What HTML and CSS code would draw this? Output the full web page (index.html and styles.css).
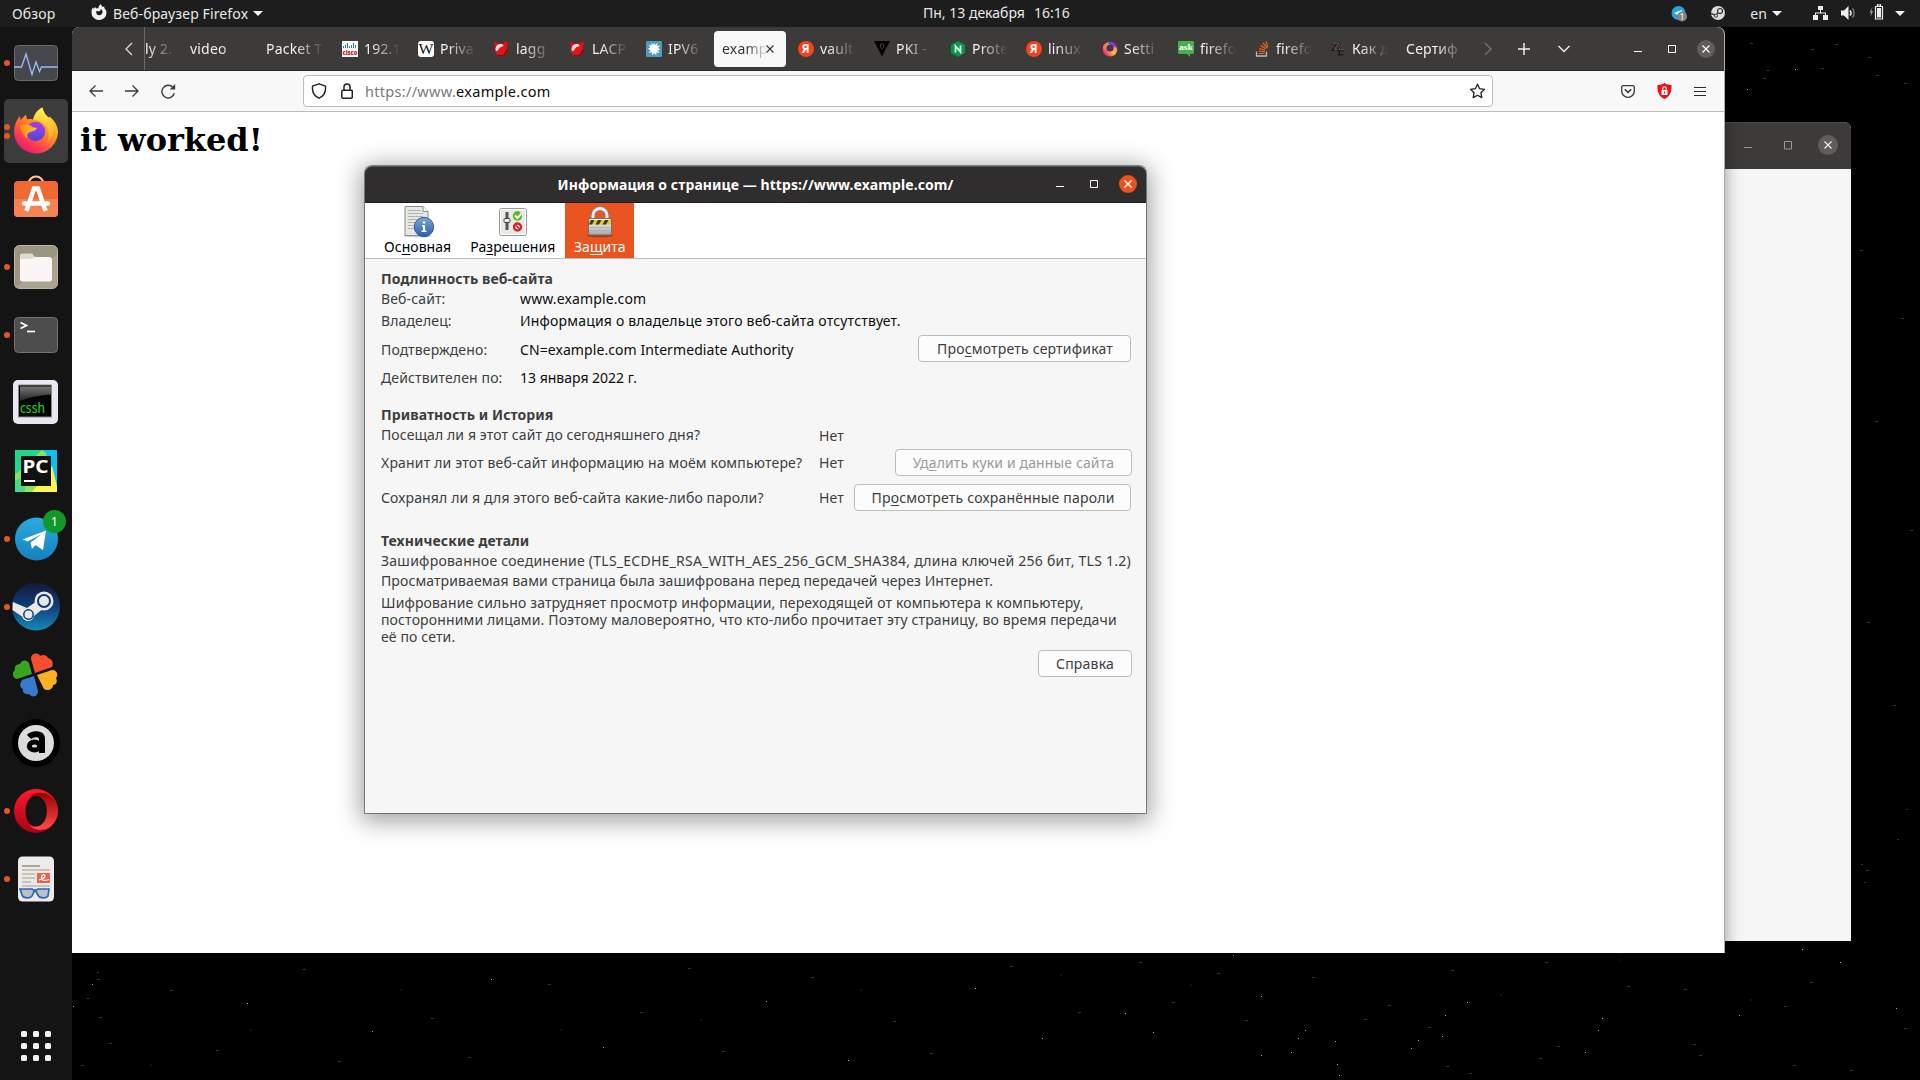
FILE: index.html
```html
<!DOCTYPE html>
<html lang="ru">
<head>
<meta charset="utf-8">
<title>Рабочий стол</title>
<link rel="stylesheet" href="styles.css">
</head>
<body>
<header class="topbar">
  <span class="overview">Обзор</span>
  <div class="app-menu">
    <svg width="16" height="16" viewBox="0 0 16 16"><path fill="#f2f2f2" fill-rule="evenodd" d="M8 16a7.4 7.4 0 0 1-7.5-7.6C.5 6 1 4.500 2.200 3.200l.5 1.500L4.600 2.900l.4 1.600c.7-.3 1.600-.2 2.300.1C7.400 2.800 8.300 1 9.800 0c.3 1.500 1 2.100 2.200 3l1.200-.6.2 1.800c1.300 1.200 2.100 2.700 2.100 4.500A7.400 7.400 0 0 1 8 16zM5 7.200c.1 2.700 1.400 4.100 3.200 4.100 2 0 3.300-1.500 3.300-3.300 0-1.500-.8-2.600-2-3.200.4 1.100.2 1.700-.6 2.300-1 .5-2.600.1-3.900.1z"/></svg>
    <span class="app-name">Веб-браузер Firefox</span>
    <i class="caret"></i>
  </div>
  <div class="clock"><span>Пн, 13 декабря</span><span>16:16</span></div>
  <div class="tray">
    <svg class="t-telegram" width="16" height="16" viewBox="0 0 16 16"><circle cx="7.500" cy="7" r="7" fill="#2aa1dc"/><path d="M3 7l8-3-1.500 7z" fill="#fff"/><circle cx="11" cy="10.500" r="5" fill="#858585"/><text x="11" y="13.600" text-anchor="middle" font-size="8" fill="#fff">1</text></svg>
    <svg class="t-steam" width="14" height="14" viewBox="0 0 14 14"><circle cx="7" cy="7" r="7" fill="#dcdcdc"/><path d="M0 7.500l4.500 1.800 3-2.800" stroke="#444" stroke-width="1.600" fill="none"/><circle cx="9" cy="5" r="2.500" fill="#dcdcdc" stroke="#333" stroke-width="1.200"/><circle cx="5" cy="9.800" r="1.600" fill="#dcdcdc" stroke="#444"/></svg>
    <span class="lang">en</span><i class="caret t-caret1"></i>
    <svg class="t-net" width="15" height="14" viewBox="0 0 15 14" fill="#eee"><path d="M5 0h5v4H8v2.500h5V9h2v5h-5V9h2V7.500H3V9h2v5H0V9h2V6.500h5V4H5z"/></svg>
    <svg class="t-vol" width="16" height="14" viewBox="0 0 16 14"><path d="M0 4.500h3L7.500 0v14L3 9.500H0z" fill="#eee"/><path d="M9 4.500c1.200 1.500 1.200 3.500 0 5" stroke="#eee" fill="none" stroke-width="1.500"/><path d="M11.500 2.500c2 2.500 2 6.500 0 9" stroke="#777" fill="none" stroke-width="1.500"/></svg>
    <svg class="t-bat" width="15" height="16" viewBox="0 0 15 16"><path d="M3.500 3L.5 8.500H2L1.500 13 4 7H2.500z" fill="#999"/><path d="M6.500 2.500h7v12.500h-7zM8.500 0h3v2h-3z" fill="none" stroke="#eee" stroke-width="1.200"/><path d="M8 4h4v9.500H8z" fill="#eee"/></svg>
    <i class="caret"></i>
  </div>
</header>

<main class="desktop">
  <svg class="stars" width="1920" height="1080" viewBox="0 0 1920 1080">
    <path class="star-bright" d="M1233 955.500h1M1261 996.500h1M1125 1013.500h1M1467 1002.500h1M1602 1018.500h1M1598 1030.500h1M1585 1052.500h1M1298 1038.500h1M1335 1041.500h1M1411 1048.500h1M1418 1040.500h1M1442 1036.500h1M1337 1064.500h1M1339 1075.500h1M1261 1055.500h1M1153 1032.500h1M1802 949.500h1M1840 962.500h1M1739 1015.500h1M1896 1008.500h1M1445 1015.500h1M1291 1052.500h1M1305 1030.500h1M1795 69.500h1M1747 89.500h1M92 984.500h1M73 1006.500h1M247 1003.500h1M372 1031.500h1M491 979.500h1M603 1047.500h1M766 1001.500h1M848 1060.500h1M975 988.500h1M1042 1038.500h1"/>
    <path class="star-dim" d="M1139 962.500h3M1217 973.500h3M1312 977.500h3M1451 970.500h3M1545 962.500h3M1627 986.500h3M1684 989.500h3M1810 982.500h3M1388 1005.500h3M1245 1020.500h3M1364 1019.500h3M1428 1027.500h3M1557 1046.500h3M1539 1058.500h3M1693 1044.500h3M1699 1055.500h3M1793 1065.500h3M1784 1006.500h3M1850 1070.500h3M1904 1028.500h3M1469 1073.500h3M1446 1066.500h3M1172 1002.500h3M1835 44.500h3M1811 49.500h3M1821 68.500h3M1763 78.500h3M1868 57.500h3M1876 75.500h3M1904 83.500h3M1750 43.500h3M1767 70.500h2M1906 809.500h2M1861 864.500h2M1866 870.500h3M1864 882.500h2M1897 839.500h2M97 972.500h2M97 979.500h3M87 998.500h2M99 1017.500h3M109 1043.500h3M81 1065.500h3M170 990.500h3M216 1050.500h3M303 969.500h3M338 1061.500h3M431 1018.500h3M468 1057.500h3M548 984.500h3M640 1012.500h3M688 968.500h3M722 1051.500h3M811 977.500h3M893 1021.500h3M930 1053.500h3M1010 966.500h3M1078 1012.500h3M1860 250.500h3M1901 318.500h3M1875 421.500h3M1910 530.500h3M1867 622.500h3M1893 705.500h3"/>
    <path class="star-faint" d="M33 920h2M43 930h2M32 938h2M32 970h2M64 981h2M24 991h2M29 1066h2M60 727h2M38 854h2M57 654h2M9 675h2M23 714h2M39 43h2M17 150h2M2 214h2M69 276h2M60 362h2M7 368h2M20 497h2M68 544h2M64 893h2M9 904h2M10 1007h2M1750 1000h2M1620 960h2M1500 995h2M1190 985h2M1060 975h2M700 1020h2M400 990h2M250 1030h2M150 1065h2M560 1030h2M860 990h2"/>
  </svg>

  <section class="window back-window">
    <header class="back-title">
      <svg width="8" height="14" viewBox="0 0 8 14"><path d="M0 9.500h8" stroke="#999"/></svg>
      <svg class="back-max" width="9" height="9" viewBox="0 0 9 9"><path d="M.5.5h7v7.500h-7z" fill="none" stroke="#999"/></svg>
      <span class="round grey"><svg width="8" height="8" viewBox="0 0 8 8"><path d="M.5.5l7 7M7.500.5l-7 7" stroke="#eee" stroke-width="1.200"/></svg></span>
    </header>
  </section>

  <section class="window browser">
    <div class="tabstrip">
      <svg class="tab-back" width="8" height="14" viewBox="0 0 8 14"><path d="M7 1L1 7l6 6" fill="none" stroke="#ddd" stroke-width="1.300"/></svg>
      <div class="tabs">
        <div class="tab first"><span>ly 2.</span></div>
        <div class="tab"><span>video</span></div>
        <div class="tab"><span>Packet T</span></div>
        <div class="tab"><svg width="16" height="16" viewBox="0 0 16 16"><path fill="#fff" d="M0 0h16v16H0z"/><path d="M1.500 5v2M3.500 3.500V7M5.500 2v5M7.500 5v2M9.500 4v3M11.500 2v5M13.500 4v3" stroke="#2b7ea8"/><text x="8" y="14" font-size="7.500" font-weight="900" fill="#c2202c" text-anchor="middle" textLength="15" lengthAdjust="spacingAndGlyphs">cisco</text></svg><span>192.1</span></div>
        <div class="tab"><svg width="16" height="16" viewBox="0 0 16 16"><rect width="16" height="16" rx="3" fill="#fff"/><text class="serif" x="8" y="13" font-size="14" text-anchor="middle" textLength="15" lengthAdjust="spacingAndGlyphs" fill="#111">W</text></svg><span>Priva</span></div>
        <div class="tab"><svg width="16" height="16" viewBox="1 0 16 16"><g id="bsd"><path d="M1 1.500c2-.8 4 0 4.500 1.200L2.600 6.300C1.300 5 .8 3 1 1.500zM14.800 1c-2-.6-4 0-4.600 1.600l3.200 3.600C14.800 4.500 15.200 2.500 14.800 1z" fill="#e00d14"/><circle cx="8" cy="8.800" r="6.300" fill="#e3141b"/><path d="M2.500 7.500C3 4 6 2.600 9 3.200c2 .6 2 2-.4 2.600-2.600.5-3 3.700-4.600 4.200-1 .2-1.700-.8-1.500-2.500z" fill="#fff" opacity=".85"/><path d="M5 14.200c4.500 1.800 8.600-1.200 8.800-5.600" fill="none" stroke="#8a0408" stroke-width="1.400"/></g></svg><span>lagg</span></div>
        <div class="tab"><svg width="16" height="16" viewBox="1 0 16 16"><use href="#bsd"/></svg><span>LACP</span></div>
        <div class="tab"><svg width="16" height="16" viewBox="0 0 16 16"><rect width="16" height="16" rx="1" fill="#4b9cc0"/><path d="M8 1.500l1 2.500 2.500-2L11.200 5l3-.5L12 7l2.500 1.500-2.700.7 1.700 2.800-3-.8-.3 3-2-2.200-2 2.300-.4-3-3 .6L4.500 9 1.500 8l2.800-1.500L2.500 4l3 .6-.2-2.800L7.300 4z" fill="#fff"/></svg><span>IPV6</span></div>
        <div class="tab active"><span>examp</span><svg width="8" height="8" viewBox="0 0 8 8"><path d="M.5.5l7 7M7.500.5l-7 7" stroke="#333" stroke-width="1.100"/></svg></div>
        <div class="tab"><svg width="16" height="16" viewBox="0 0 16 16"><circle cx="8" cy="8" r="8" fill="#fc3f1d"/><text x="7.700" y="12.200" font-size="12" font-weight="700" text-anchor="middle" fill="#fff">Я</text></svg><span>vault</span></div>
        <div class="tab"><svg width="16" height="16" viewBox="0 0 16 16"><path d="M0 0h16L8 15.500z" fill="#000"/><path d="M6.500 3h3v3l-1.500 2-1.500-2z" fill="none" stroke="#3a3a3a"/></svg><span>PKI -</span></div>
        <div class="tab"><svg width="16" height="16" viewBox="0 0 16 16"><path d="M8 0l7 4v8l-7 4-7-4V4z" fill="#009b48"/><path d="M5.500 11.500V5l5 6V4.500" fill="none" stroke="#fff" stroke-width="1.700"/></svg><span>Prote</span></div>
        <div class="tab"><svg width="16" height="16" viewBox="0 0 16 16"><circle cx="8" cy="8" r="8" fill="#fc3f1d"/><text x="7.700" y="12.200" font-size="12" font-weight="700" text-anchor="middle" fill="#fff">Я</text></svg><span>linux</span></div>
        <div class="tab"><svg width="16" height="16" viewBox="0 0 16 16"><defs><linearGradient id="ff" x1=".9" y1=".2" x2=".2" y2=".8"><stop offset="0" stop-color="#7b3ff2"/><stop offset=".2" stop-color="#ffa436"/><stop offset=".55" stop-color="#ffb04a"/><stop offset="1" stop-color="#f4306c"/></linearGradient></defs><circle cx="8" cy="8.300" r="7.300" fill="url(#ff)"/><path d="M5 2c4-2.500 9-.5 9.800 5l-3-1.500z" fill="#7a3be0"/><circle cx="8" cy="7" r="3.600" fill="#3d3655"/><path d="M1 5l3-3 1 2-2 3z" fill="#ff7a30"/></svg><span>Setti</span></div>
        <div class="tab"><svg width="16" height="16" viewBox="0 0 16 16"><path d="M1.500 0h13A1.500 1.500 0 0 1 16 1.500v10a1.500 1.500 0 0 1-1.500 1.500H12v3l-3-3H1.500A1.500 1.500 0 0 1 0 11.500v-10A1.500 1.500 0 0 1 1.500 0z" fill="#48b04b"/><text class="serif" x="8" y="9" font-size="9" font-weight="700" text-anchor="middle" textLength="14" lengthAdjust="spacingAndGlyphs" fill="#fff">ask</text></svg><span>firefo</span></div>
        <div class="tab"><svg width="16" height="16" viewBox="0 0 16 16" fill="none"><path d="M2.500 10.500V15h10v-4.500" stroke="#bcbbbb" stroke-width="1.300"/><path d="M4.500 12.500h6M4.700 10l6 .8M5.200 7.500l5.900 1.800M6.600 4.500l5.300 3.200M9 2l4 4.800M12 .3l1.800 6" stroke="#f1681a" stroke-width="1.200"/></svg><span>firefo</span></div>
        <div class="tab"><svg width="16" height="16" viewBox="0 0 16 16" fill="none"><path d="M2.500 3.500L8 2 2.500 9l4.500-.5M12 1.500L8 9.500h6M11 6l-2.500 8 5-.5" stroke="#1d1a19" stroke-width="1.500"/><path d="M3 3l6-1-5 6.500h3M12.500 1.500L9 8.500h5" stroke="#86695a" stroke-width=".7"/></svg><span>Как д</span></div>
        <div class="tab"><span>Сертиф</span></div>
      </div>
      <div class="strip-controls">
        <svg width="8" height="14" viewBox="0 0 8 14"><path d="M1 1l6 6-6 6" fill="none" stroke="#77756f" stroke-width="1.300"/></svg>
        <svg class="c-plus" width="12" height="12" viewBox="0 0 12 12"><path d="M6 0v12M0 6h12" stroke="#eee" stroke-width="1.500"/></svg>
        <svg class="c-down" width="12" height="8" viewBox="0 0 12 8"><path d="M.5 1L6 6.500 11.500 1" fill="none" stroke="#eee" stroke-width="1.400"/></svg>
        <svg class="c-min" width="8" height="14" viewBox="0 0 8 14"><path d="M0 9.500h8" stroke="#fff"/></svg>
        <svg class="c-max" width="8" height="8" viewBox="0 0 8 8"><path d="M.5.5h7v7h-7z" fill="none" stroke="#fff"/></svg>
        <span class="round grey"><svg width="8" height="8" viewBox="0 0 8 8"><path d="M.5.5l7 7M7.500.5l-7 7" stroke="#fff" stroke-width="1.200"/></svg></span>
      </div>
    </div>
    <div class="toolbar">
      <div class="nav">
        <svg width="14" height="14" viewBox="0 0 14 14"><path d="M14 7H1M6.500 1.500L1 7l5.500 5.500" fill="none" stroke="#3a3a3a" stroke-width="1.300"/></svg>
        <svg width="14" height="14" viewBox="0 0 14 14"><path d="M0 7h13M7.500 1.500L13 7l-5.500 5.500" fill="none" stroke="#3a3a3a" stroke-width="1.300"/></svg>
        <svg width="15" height="15" viewBox="0 0 15 15"><path d="M13.300 9.200A6.300 6.300 0 1 1 11.800 3.300" fill="none" stroke="#3a3a3a" stroke-width="1.400"/><path d="M14.200 0v5.500H8.700z" fill="#3a3a3a"/></svg>
      </div>
      <div class="urlbar">
        <svg width="16" height="16" viewBox="0 0 16 16"><path d="M8 .8l6.500 2.400c.5 5.500-1.500 9.800-6.500 12C3 13 1 8.700 1.500 3.200z" fill="none" stroke="#222" stroke-width="1.400" stroke-linejoin="round"/></svg>
        <svg class="lock" width="12" height="16" viewBox="0 0 12 16"><path d="M3 7V4a3 3 0 0 1 6 0v3" fill="none" stroke="#222" stroke-width="1.500"/><rect x=".8" y="7.200" width="10.500" height="8" rx="1.200" fill="none" stroke="#222" stroke-width="1.500"/></svg>
        <span class="url">https://www.<b>example.com</b></span>
        <svg width="17" height="16" viewBox="0 0 17 16"><path d="M8.500 1.200l2.100 4.500 4.900.6-3.600 3.400.9 4.900-4.300-2.400-4.300 2.400.9-4.900L1.500 6.300l4.900-.6z" fill="none" stroke="#222" stroke-width="1.300" stroke-linejoin="round"/></svg>
      </div>
      <div class="actions">
        <svg width="14" height="13" viewBox="0 0 14 13"><path d="M2 .7h10a1.300 1.300 0 0 1 1.300 1.300v4a6.300 6.300 0 0 1-12.600 0V2A1.300 1.300 0 0 1 2 .7z" fill="none" stroke="#3a3a3a" stroke-width="1.300"/><path d="M3.800 4.300L7 7.400l3.200-3.100" fill="none" stroke="#3a3a3a" stroke-width="1.500"/></svg>
        <svg width="15" height="16" viewBox="0 0 15 16"><path d="M7.500 0c2 1.600 4.500 2 7 2 .5 6.500-1.500 11.500-7 14C2 13.500 0 8.500.5 2c2.500 0 5-.4 7-2z" fill="#f00f14"/><rect x="4.500" y="7" width="6" height="5" fill="#fff"/><path d="M5.800 7V5.500a1.700 1.700 0 0 1 3.400 0V7" fill="none" stroke="#fff" stroke-width="1.100"/><path d="M7.500 8.500v2" stroke="#f00f14"/></svg>
        <svg width="12" height="11" viewBox="0 0 12 11"><path d="M0 1.500h12M0 5.500h12M0 9.500h12" stroke="#2a2a2a"/></svg>
      </div>
    </div>
    <div class="page"><h1>it worked!</h1></div>
  </section>

  <section class="window dialog">
    <header class="dialog-title">
      <span class="dialog-name">Информация о странице — https://www.example.com/</span>
      <div class="dialog-controls">
        <svg width="8" height="8" viewBox="0 0 8 8"><path d="M0 6.500h8" stroke="#fff"/></svg>
        <svg width="8" height="8" viewBox="0 0 8 8"><path d="M.5.5h7v7h-7z" fill="none" stroke="#fff"/></svg>
        <span class="round orange"><svg width="8" height="8" viewBox="0 0 8 8"><path d="M.5.5l7 7M7.500.5l-7 7" stroke="#fff" stroke-width="1.200"/></svg></span>
      </div>
    </header>
    <nav class="categories">
      <div class="category">
        <svg width="32" height="32" viewBox="0 0 32 32"><defs><linearGradient id="info" x1="0" y1="0" x2="0" y2="1"><stop offset="0" stop-color="#7ea6d6"/><stop offset="1" stop-color="#2a5ea8"/></linearGradient></defs><ellipse cx="16" cy="30" rx="14" ry="1.500" fill="#ccc"/><path d="M3 .5h18l5 5V29.500H3z" fill="#e6e8e2" stroke="#8b8d88"/><path d="M21 .5V5.500h5" fill="#fff" stroke="#8b8d88"/><path d="M6 4.500h13M6 7.500h15M6 10.500h15M6 13.500h15M6 16.500h12M6 19.500h7M6 22.500h6" stroke="#b2b5ad"/><circle cx="22" cy="21" r="9.700" fill="url(#info)" stroke="#2d5a9a"/><path d="M20 19h3v5.500h1.500V26h-5v-1.500H21V20.500h-1zM20.700 15.500h2.600v2h-2.600z" fill="#fff"/></svg>
        <span>Ос<u>н</u>овная</span>
      </div>
      <div class="category">
        <svg width="32" height="32" viewBox="0 0 32 32"><rect x="2.500" y="2.500" width="27" height="27" rx="2" fill="#e9eae6" stroke="#999b96"/><rect x="3.500" y="3.500" width="25" height="25" rx="1" fill="none" stroke="#fff"/><path d="M10 6v18" stroke="#555" stroke-width="3"/><rect x="7" y="12.500" width="6" height="4" rx="1" fill="#eee" stroke="#444"/><circle cx="20.500" cy="10" r="4.700" fill="#55b81c"/><path d="M18 9.500l2.500 2.500 4-4.500" fill="none" stroke="#fff" stroke-width="2"/><circle cx="20.500" cy="21" r="3.500" fill="#fff" stroke="#dc2226" stroke-width="2.400"/><path d="M18.500 19l4 4" stroke="#dc2226" stroke-width="1.600"/></svg>
        <span>Ра<u>з</u>решения</span>
      </div>
      <div class="category selected">
        <svg width="32" height="32" viewBox="0 0 32 32"><defs><linearGradient id="steel" x1="0" y1="0" x2="0" y2="1"><stop offset="0" stop-color="#fafafa"/><stop offset="1" stop-color="#a5a5a5"/></linearGradient></defs><ellipse cx="16" cy="29.500" rx="13" ry="1.800" fill="#a53a17"/><path d="M9 14V9.500a7 7 0 0 1 14 0V14" fill="none" stroke="#7e7e7a" stroke-width="5"/><path d="M9 14V9.500a7 7 0 0 1 14 0V14" fill="none" stroke="#e9e9e6" stroke-width="3"/><rect x="4.500" y="12.500" width="23" height="16.500" rx="1.500" fill="url(#steel)" stroke="#6f6f6b"/><path d="M5 14h22v4.500H5z" fill="#e8c72a"/><path d="M7 14h3.500l-2.500 4.500H5zM14 14h3.500L15 18.500h-3.500zM21 14h3.500L22 18.500h-3.500z" fill="#3c3920"/><path d="M6 21.500h20M6 24.500h20" stroke="#b4b4b4"/></svg>
        <span>За<u>щ</u>ита</span>
      </div>
    </nav>
    <div class="dialog-body">
      <h2>Подлинность веб-сайта</h2>
      <dl class="identity">
        <dt>Веб-сайт:</dt><dd>www.example.com</dd>
        <dt>Владелец:</dt><dd class="owner">Информация о владельце этого веб-сайта отсутствует.</dd>
        <dt>Подтверждено:</dt><dd class="verified"><span>CN=example.com Intermediate Authority</span><button class="b-cert">Про<u>с</u>мотреть сертификат</button></dd>
        <dt>Действителен по:</dt><dd class="expiry">13 января 2022 г.</dd>
      </dl>
      <h2>Приватность и История</h2>
      <div class="privacy">
        <span class="visited">Посещал ли я этот сайт до сегодняшнего дня?</span><span class="low">Нет</span><span></span>
        <span class="stored">Хранит ли этот веб-сайт информацию на моём компьютере?</span><span>Нет</span><button class="b-cookies" disabled>Уд<u>а</u>лить куки и данные сайта</button>
        <span>Сохранял ли я для этого веб-сайта какие-либо пароли?</span><span>Нет</span><button class="b-pass">Пр<u>о</u>смотреть сохранённые пароли</button>
      </div>
      <h2>Технические детали</h2>
      <p class="cipher">Зашифрованное соединение (TLS_ECDHE_RSA_WITH_AES_256_GCM_SHA384, длина ключей 256 бит, TLS 1.2)</p>
      <p class="encrypted">Просматриваемая вами страница была зашифрована перед передачей через Интернет.</p>
      <p class="note">Шифрование сильно затрудняет просмотр информации, переходящей от компьютера к компьютеру,<br>посторонними лицами. Поэтому маловероятно, что кто-либо прочитает эту страницу, во время передачи<br>её по сети.</p>
      <button class="b-help">Справка</button>
    </div>
  </section>

  <aside class="dock">
    <div class="item running"><svg width="48" height="48" viewBox="0 0 48 48"><rect x="2.500" y="6.500" width="43" height="35" rx="4" fill="#45474b" stroke="#6a6b6e"/><path d="M2 28h7.500l4.500-13 6 20.500 4-12.500 3.500 9.500 2-4.500H46" fill="none" stroke="#9dbcf8" stroke-width="1.300"/></svg></div>
    <div class="item running double current"><svg width="48" height="48" viewBox="0 0 48 48"><defs>
      <linearGradient id="f1" x1=".9" y1="0" x2=".2" y2="1"><stop offset="0" stop-color="#fff04a"/><stop offset=".4" stop-color="#ff9a20"/><stop offset=".75" stop-color="#ff3c50"/><stop offset="1" stop-color="#e3127c"/></linearGradient>
      <linearGradient id="f2" x1="0" y1="0" x2="0" y2="1"><stop offset="0" stop-color="#b833e1"/><stop offset=".5" stop-color="#7a44f0"/><stop offset="1" stop-color="#4b47c8"/></linearGradient>
      <linearGradient id="f3" x1="0" y1="0" x2="0" y2="1"><stop offset="0" stop-color="#fff44f"/><stop offset="1" stop-color="#ffa01e"/></linearGradient>
      <linearGradient id="f4" x1="0" y1="0" x2="1" y2="0"><stop offset="0" stop-color="#ff8a16"/><stop offset="1" stop-color="#ffc02d"/></linearGradient></defs>
      <path d="M24 46.500A22 22 0 0 1 2 25C2 18.500 4.500 13 8 9l.5 4L14 7.500l1 5c2-.6 4-.6 6 0C22 7.500 25 3 30.500.5c.8 5 3 7 6 10l1-1c4 3 8.500 8.500 8.500 16A22 22 0 0 1 24 46.500z" fill="url(#f1)"/><circle cx="23.500" cy="24.500" r="9.700" fill="url(#f2)"/><path d="M21.500 12.500C22.500 7.500 25.500 3 30.500.5c1 6 4.500 8 8.500 13 5 6.500 3.500 18-4 22 3-5 2.500-12.500-1-16.500-3-3.500-7-6-12.500-6.500z" fill="url(#f3)"/><path d="M8 19c4-3 9-2 12 .8 1.500 1 3.500 1 5 1-.7 2.600-3.500 3.600-6 4-3.500 1-4.500 3.500-3.500 6.500-4-2-6.500-6.500-7.500-12.300z" fill="url(#f4)"/></svg></div>
    <div class="item"><svg width="48" height="48" viewBox="0 0 48 48"><path d="M16.500 9a7.500 7.500 0 0 1 15 0" fill="none" stroke="#f3cda3" stroke-width="2"/><rect x="2" y="6" width="44" height="36" rx="4" fill="#ee6a33"/><path d="M2 24h44v14a4 4 0 0 1-4 4H6a4 4 0 0 1-4-4z" fill="#f4834f"/><path d="M14.500 36L22 13.500h4L33.500 36" fill="none" stroke="#fff" stroke-width="4.500"/><path d="M12 28.500h24" stroke="#fff" stroke-width="4.500" stroke-linecap="round"/></svg></div>
    <div class="item running"><svg width="48" height="48" viewBox="0 0 48 48"><rect x="2.500" y="2.500" width="43" height="43" rx="5" fill="#9c957f" stroke="#bcb6a6"/><path d="M3 45L45 12v28a5 5 0 0 1-5 5z" fill="#aaa38e"/><path d="M8 13a2.500 2.500 0 0 1 2.500-2.500H20l3 3.500v5H8z" fill="#dfdacd"/><path d="M8 16h12l3-2h14.500a2.500 2.500 0 0 1 2.500 2.500V36a2.500 2.500 0 0 1-2.500 2.500h-27A2.500 2.500 0 0 1 8 36z" fill="#f8f7f5"/></svg></div>
    <div class="item running"><svg width="48" height="48" viewBox="0 0 48 48"><rect x="2.500" y="6.500" width="43" height="35" rx="4" fill="#4d4d4d" stroke="#727272"/><path d="M8.500 11.500l6 3-6 3" fill="none" stroke="#fff" stroke-width="1.700"/><path d="M15 20.500h8" stroke="#fff" stroke-width="1.700"/></svg></div>
    <div class="item"><svg width="48" height="48" viewBox="0 0 48 48"><defs><linearGradient id="c1" x1="0" y1="0" x2="0" y2="1"><stop offset="0" stop-color="#777"/><stop offset="1" stop-color="#222"/></linearGradient></defs><rect x="1" y="1" width="45" height="44" rx="5" fill="#e8e8f2"/><path d="M6.500 6h33v32h-33z" fill="#050505" stroke="#888"/><path d="M8 7.500h31v8C28 16 18 18 8 22z" fill="url(#c1)"/><text x="8" y="34" font-size="14" textLength="25" lengthAdjust="spacingAndGlyphs" fill="#12e012">cssh</text></svg></div>
    <div class="item"><svg width="48" height="48" viewBox="0 0 48 48"><path d="M3 3h42v42H3z" fill="#21d789"/><path d="M27 3h18v42z" fill="#07c3f2"/><path d="M3 28L30 3l4 3 8 30-22 9H3z" fill="#8fe05a"/><path d="M20 45l20-26 5 20v6z" fill="#fcf84a"/><path d="M3 34l10-6v17H3z" fill="#45dc80"/><path d="M9 9h30v30H9z" fill="#111"/><text x="10.500" y="26" font-size="18" font-weight="700" textLength="26" lengthAdjust="spacingAndGlyphs" fill="#fff">PC</text><path d="M12 34h11" stroke="#fff" stroke-width="2"/></svg></div>
    <div class="item running"><svg width="48" height="48" viewBox="0 0 48 48"><defs><linearGradient id="tg" x1="0" y1="0" x2="0" y2="1"><stop offset="0" stop-color="#2fa8df"/><stop offset="1" stop-color="#1482bd"/></linearGradient></defs><circle cx="24.500" cy="24" r="21.500" fill="url(#tg)"/><path d="M10.500 24.500L34 15.500 31 35l-7.500-5-3.500 4-1.500-6.500L30 19 15.500 26.500z" fill="#fff"/></svg><span class="badge">1</span></div>
    <div class="item running"><svg width="48" height="48" viewBox="0 0 48 48"><defs><linearGradient id="st" x1="0" y1="0" x2="0" y2="1"><stop offset="0" stop-color="#15193a"/><stop offset=".5" stop-color="#103d76"/><stop offset="1" stop-color="#168bbb"/></linearGradient></defs><circle cx="24" cy="23.500" r="24" fill="url(#st)"/><path d="M.8 19L15 25l10-7 7 7-10 8c-1 6-10 7-12 .5L.5 27z" fill="#e9e9ec"/><circle cx="32" cy="18" r="9.500" fill="#e9e9ec"/><circle cx="32" cy="18" r="6" fill="#e9e9ec" stroke="#14396f" stroke-width="2"/><circle cx="16.500" cy="31.500" r="4.700" fill="#e9e9ec" stroke="#14396f" stroke-width="1.500"/></svg></div>
    <div class="item"><svg width="48" height="48" viewBox="0 0 48 48"><path d="M23 22L19 8c0-6 7-7 9-3 3-2 7-1 8 2 4 1 6 4 4 9z" fill="#f4502d"/><path d="M25 24l15-5c5 0 7 5 4 8 2 4 0 7-3 7 0 5-6 6-9 4z" fill="#fbb023"/><path d="M22 25l4 15c0 6-6 7-9 3-4 1-7-2-6-5-4-2-3-6-1-9z" fill="#397bca"/><path d="M20 23L5 28c-5-1-5-7-2-9-1-4 2-6 5-6 2-5 7-4 9-1z" fill="#38a51d"/></svg></div>
    <div class="item"><svg width="48" height="48" viewBox="0 0 48 48"><circle cx="24" cy="24" r="24" fill="#000"/><circle cx="24" cy="24" r="18" fill="#dcdcdc"/><path d="M17 18c4-4 13-4 13 2v11h3" fill="none" stroke="#000" stroke-width="6"/><ellipse cx="22.500" cy="27" rx="5.200" ry="4" fill="none" stroke="#000" stroke-width="5"/></svg></div>
    <div class="item running"><svg width="48" height="48" viewBox="0 0 48 48"><defs><linearGradient id="o1" x1="0" y1="0" x2="0" y2="1"><stop offset="0" stop-color="#ff1b2d"/><stop offset="1" stop-color="#a70014"/></linearGradient><linearGradient id="o2" x1="0" y1="0" x2="0" y2="1"><stop offset="0" stop-color="#9c0000"/><stop offset="1" stop-color="#ff4b4b"/></linearGradient></defs><path fill-rule="evenodd" d="M24 2a22 22 0 1 0 0 44 22 22 0 0 0 0-44zm0 6.500c6 0 11 6.500 11 15.500s-5 15.500-11 15.500S13.500 33 13.500 24 18 8.500 24 8.500z" fill="url(#o1)"/><path d="M17 11c4-6 11-6 17-4.500 8 4 12 10 12 17.500S41 39 34 42c-6 1.500-13 1-17-5 3 3 7 3.500 10 2 5-2 8-8 8-15S32 11.500 27 9c-3-1.500-7-1-10 2z" fill="url(#o2)"/></svg></div>
    <div class="item running"><svg width="48" height="48" viewBox="0 0 48 48"><rect x="6" y="1.500" width="36" height="45" rx="4.500" fill="#ecebea"/><path d="M10 11h18" stroke="#aca692" stroke-width="2"/><path d="M10 15h28M10 19h13M10 23h13M10 27h9M10 31h28" stroke="#c7c3b6" stroke-width="2"/><path d="M25 18h13v10H25z" fill="#f4604e"/><path d="M27 25c3-1 6-2 6-4s-3-2-3.500 1 1.500 4.500 7.500 2.500" fill="none" stroke="#fff" stroke-width="1.300"/><path d="M8 34h12l1.500 1h3L26 34h11l-1 7c-2 2.500-8 2.500-9.500 0L24 36.500h-2L20 41c-2 2.500-8 2.500-9.500 0z" fill="#bcbfc6" stroke="#2667c2" stroke-width="1.700"/></svg></div>
    <div class="item apps"><svg width="30" height="30" viewBox="0 0 30 30" fill="#f2f2f2"><rect width="6" height="6" rx="1.500"/><rect x="12" width="6" height="6" rx="1.500"/><rect x="24" width="6" height="6" rx="1.500"/><rect y="12" width="6" height="6" rx="1.500"/><rect x="12" y="12" width="6" height="6" rx="1.500"/><rect x="24" y="12" width="6" height="6" rx="1.500"/><rect y="24" width="6" height="6" rx="1.500"/><rect x="12" y="24" width="6" height="6" rx="1.500"/><rect x="24" y="24" width="6" height="6" rx="1.500"/></svg></div>
  </aside>
</main>
</body>
</html>
```
FILE: styles.css
```css
* { box-sizing: border-box; }
body {
  margin: 0;
  width: 1920px;
  height: 1080px;
  overflow: hidden;
  background: #000;
  font: 14px/17px "Noto Sans", sans-serif;
  letter-spacing: 0.13px;
  display: flex;
  flex-direction: column;
}
svg { display: block; flex: none; }
svg text { letter-spacing: 0; }
.serif { font-family: "Liberation Serif", serif; }
h1, h2, p, dl, dd { margin: 0; }
u { text-decoration-thickness: 1px; text-underline-offset: 2px; text-decoration-skip-ink: none; }

/* top panel */
.topbar {
  position: relative;
  z-index: 5;
  height: 27px;
  background: #1d1d1d;
  color: #e8e8e8;
  display: grid;
  grid-template-columns: 91px 832px 1fr auto;
  align-items: center;
  padding-right: 15px;
}
.overview { padding-left: 12px; }
.app-menu { display: flex; align-items: center; gap: 6px; }
.app-menu svg { margin-top: -3px; }
.caret { border: 5px solid transparent; border-top-color: #f2f2f2; border-bottom: 0; }
.app-name { margin-right: -1px; }
.clock { display: flex; gap: 9px; margin-top: -2px; letter-spacing: 0; }
.tray { display: flex; align-items: center; }
.t-telegram { margin-right: 24px; }
.t-steam { margin-right: 25px; margin-top: -2px; }
.t-caret1 { margin: 0 31px 0 5px; }
.t-net { margin-right: 13px; margin-top: -2px; }
.t-vol { margin-right: 12px; margin-top: -1px; }
.t-bat { margin-right: 11px; margin-top: -3px; }

.desktop { flex: 1; position: relative; }
.stars { position: absolute; left: 0; top: -27px; fill: none; }
.star-bright { stroke: #aaa; }
.star-dim { stroke: #333; }
.star-faint { stroke: #222; }

.window { position: absolute; display: flex; flex-direction: column; }
.round { border-radius: 50%; display: grid; place-items: center; width: 18px; height: 18px; flex: none; }
.grey { background: #5f5e5c; }
.orange { background: #e95420; }

/* inactive window behind the browser */
.back-window { left: 1100px; top: 95px; width: 751px; height: 819px; background: #f6f6f6; border-radius: 7px 7px 0 0; overflow: hidden; }
.back-title { height: 47px; background: #3d3b39; border-top: 1px solid #4c4a48; display: flex; justify-content: flex-end; align-items: center; gap: 31px; padding: 0 13px 2px 0; }
.back-max { margin-right: -1px; margin-left: 1px; }
.back-title .round { width: 20px; height: 20px; margin-left: -5px; }

/* browser */
.browser { left: 72px; top: 0; width: 1652px; height: 926px; background: #fff; border-radius: 7px 7px 0 0; box-shadow: 1px 0 0 #aaa, 2px 0 16px rgba(0,0,0,.35); }
.tabstrip { height: 44px; background: #3d3b39; border-bottom: 1px solid #2c2a29; border-radius: 7px 7px 0 0; display: flex; align-items: center; color: #f0f0f0; }
.tab-back { margin: 0 11px 0 53px; }
.tabs { width: 1324px; height: 43px; border-left: 1px solid #6a6866; display: flex; align-items: center; overflow: hidden; letter-spacing: 0.2px; }
.tab { width: 76px; flex: none; padding: 0 8px; height: 36px; display: flex; align-items: center; gap: 6px; white-space: nowrap; }
.tab span { flex: 1; min-width: 0; line-height: 24px; padding-top: 1px; -webkit-mask-image: linear-gradient(90deg, #000 calc(100% - 30px), transparent calc(100% - 2px)); mask-image: linear-gradient(90deg, #000 calc(100% - 30px), transparent calc(100% - 2px)); }
.tab.first { width: 37px; padding-left: 0; }
.tab.first span { margin-right: -3px; }
.tab.active { width: 72px; margin-right: 4px; background: #f8f8f8; border-radius: 4px; color: #333; padding-right: 12px; gap: 0; }
.tab.active span { -webkit-mask-image: linear-gradient(90deg, #000 24px, transparent 46px); mask-image: linear-gradient(90deg, #000 24px, transparent 46px); }
.strip-controls { flex: 1; display: flex; align-items: center; padding-left: 16px; }
.c-plus { margin-left: 26px; }
.c-down { margin-left: 28px; }
.c-min { margin-left: 64px; }
.c-max { margin-left: 26px; margin-right: 21px; }

.toolbar { height: 41px; background: #f8f8f8; border-bottom: 1px solid #bcbcbc; display: flex; align-items: center; }
.nav { width: 231px; padding-left: 17px; display: flex; align-items: center; gap: 22px; }
.urlbar { width: 1190px; height: 32px; background: #fff; border: 1px solid #bcbcbc; border-radius: 4px; display: flex; align-items: center; padding: 0 6px 0 7px; }
.lock { margin: 0 12px 0 14px; }
.url { flex: 1; color: #7a7a7a; font-size: 14.5px; letter-spacing: 0.3px; }
.url b { color: #0c0c0c; font-weight: 400; }
.actions { flex: 1; display: flex; align-items: center; justify-content: flex-end; gap: 22px; padding-right: 18px; }
.page { flex: 1; padding: 9px 8px; }
.page h1 { font: bold 32px/38px "DejaVu Serif", serif; color: #000; letter-spacing: 0; }

/* page info dialog */
.dialog { left: 365px; top: 139px; width: 781px; height: 647px; background: #f6f6f6; border-radius: 7px 7px 0 0; box-shadow: 0 0 0 1px rgba(0,0,0,.4), 0 4px 24px 4px rgba(0,0,0,.38); color: #3d3d3d; }
.dialog-title { height: 37px; background: #2f2d2e; border-top: 1px solid #565455; border-bottom: 1px solid #1c1a1b; border-radius: 7px 7px 0 0; display: grid; grid-template-columns: 1fr auto 1fr; align-items: center; color: #fff; padding-right: 9px; }
.dialog-name { grid-column: 2; font-weight: 700; letter-spacing: 0.08px; padding-left: 9px; }
.dialog-controls { display: flex; justify-content: flex-end; align-items: center; gap: 26px; padding-bottom: 2px; }
.dialog-controls .round { margin-left: -5px; }
.categories { height: 56px; background: #fff; border-bottom: 1px solid #bcbcbc; display: flex; padding-left: 10px; color: #000; letter-spacing: 0.05px; }
.category { display: flex; flex-direction: column; align-items: center; padding: 3px 9px 0; }
.category span { line-height: 18px; }
.category:nth-child(2) { margin-left: 1px; margin-right: 1px; }
.category.selected { background: #e95420; color: #fff; width: 69px; }
.dialog-body { padding: 11px 15px 0 16px; display: flex; flex-direction: column; }
.dialog-body h2 { font: bold 14px/17px "Noto Sans", sans-serif; letter-spacing: 0.08px; }
.identity { display: grid; grid-template-columns: 139px 1fr; grid-template-rows: 23px 21px 37px 19px; align-items: center; margin-bottom: 19px; }
.identity dd { color: #0c0c0c; }
.identity .owner { letter-spacing: 0.19px; }
.identity .expiry { letter-spacing: 0; }
.verified { display: flex; justify-content: space-between; align-items: center; letter-spacing: 0.08px; }
.privacy { display: grid; grid-template-columns: 438px 35px 1fr; grid-template-rows: 23px 33px 37px; align-items: center; margin-bottom: 16px; }
.low { padding-top: 2px; }
.visited { letter-spacing: 0.1px; }
.stored { letter-spacing: 0.17px; }
button { font: inherit; letter-spacing: 0.2px; height: 27px; padding: 0 0 1px; border: 1px solid #bcbcbc; border-radius: 4px; background: #fcfcfc; color: #3d3d3d; justify-self: end; }
button:disabled { color: #9a9a9a; }
.b-cert { width: 213px; margin-bottom: 2px; padding-left: 1px; }
.b-cookies { width: 237px; margin-right: -1px; letter-spacing: 0.13px; }
.b-pass { width: 277px; padding-left: 1px; }
.b-help { width: 94px; align-self: flex-end; margin-top: 5px; margin-right: -1px; }
.dialog-body p { margin-top: 3px; white-space: nowrap; }
.dialog-body .cipher { letter-spacing: 0.25px; }
.dialog-body .encrypted { letter-spacing: 0.1px; }
.dialog-body .note { margin-top: 5px; letter-spacing: 0.14px; }

/* dock */
.dock { position: absolute; left: 0; top: 0; width: 72px; height: 1053px; background: rgba(24,24,24,.82); display: flex; flex-direction: column; padding: 4px 4px 0; }
.item { position: relative; height: 64px; margin-bottom: 4px; display: grid; place-items: center; border-radius: 5px; flex: none; }
.item:first-child { margin-bottom: 4px; }
.current { background: #3c3c3c; }
.running::before { content: ""; position: absolute; left: 0; top: 29px; width: 6px; height: 6px; border-radius: 50%; background: #e95420; }
.double::before { top: 25px; box-shadow: 0 9px 0 #e95420; }
.badge { position: absolute; left: 39px; top: 3px; width: 23px; height: 23px; border-radius: 50%; background: #12982a; color: #fff; font-size: 12px; line-height: 23px; text-align: center; }
.apps { margin-top: auto; height: 68px; margin-bottom: 0; }
```
